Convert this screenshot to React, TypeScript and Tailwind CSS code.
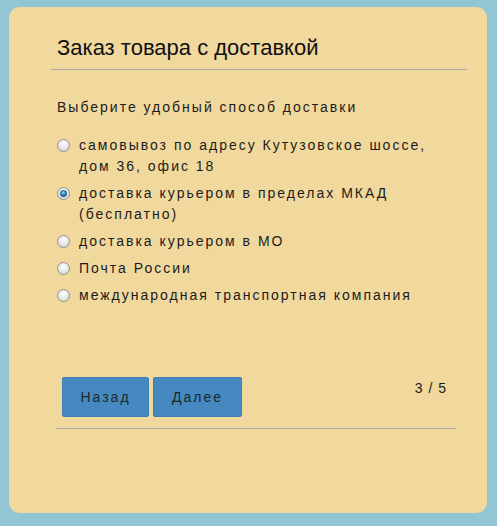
import React from "react";

const options = [
  { label: "самовывоз по адресу Кутузовское шоссе, дом 36, офис 18", checked: false },
  { label: "доставка курьером в пределах МКАД (бесплатно)", checked: true },
  { label: "доставка курьером в МО", checked: false },
  { label: "Почта России", checked: false },
  { label: "международная транспортная компания", checked: false },
];

function Radio({ checked }: { checked: boolean }) {
  return (
    <svg width="13" height="13" viewBox="0 0 13 13" className="shrink-0 mt-[4px]">
      <defs>
        <radialGradient id="rg" cx="50%" cy="35%" r="65%">
          <stop offset="0%" stopColor="#ffffff" />
          <stop offset="100%" stopColor="#d8d8d8" />
        </radialGradient>
        <radialGradient id="rb" cx="45%" cy="35%" r="60%">
          <stop offset="0%" stopColor="#7fd0f5" />
          <stop offset="100%" stopColor="#0a5f96" />
        </radialGradient>
      </defs>
      <circle cx="6.5" cy="6.5" r="6" fill="url(#rg)" stroke="#8f8f8f" strokeWidth="1" />
      {checked && <circle cx="6.5" cy="6.5" r="3.2" fill="url(#rb)" stroke="#1d4d6e" strokeWidth="0.6" />}
    </svg>
  );
}

export default function App() {
  return (
    <div className="w-[497px] h-[526px] bg-[#92c6d5] pt-[7px] pl-[9px] pr-[10px] pb-[13px] font-['Liberation_Sans',Arial,sans-serif] text-[#1c1c1c]">
      <div className="h-full bg-[#f1d89d] rounded-[11px] pt-[28px] pl-[42px] pr-[20px]">
        <div className="border-b border-[#a9a9a9] pb-[9px] pl-[6px]">
          <h1 className="text-[22px] leading-[25px] text-[#111]">Заказ товара с доставкой</h1>
        </div>
        <div className="pl-[6px] pt-[27px] text-[14px] tracking-[2px]">
          <p className="leading-[20px]">Выберите удобный способ доставки</p>
          <div className="mt-[18px] flex flex-col gap-[6px]">
            {options.map((o) => (
              <label key={o.label} className="flex items-start gap-[9px] leading-[21px] pr-[20px]">
                <Radio checked={o.checked} />
                <span>{o.label}</span>
              </label>
            ))}
          </div>
        </div>
        <div className="mt-[71px] ml-[5px] mr-[11px] flex items-start border-b border-[#a9a9a9] pb-[11px]">
          <div className="flex gap-[4px] pl-[6px]">
            <button className="w-[87px] h-[40px] bg-[#4689c0] rounded-[2px] text-[14px] tracking-[2px] text-[#1a2a2a] border border-[#3f7fb3]">Назад</button>
            <button className="w-[89px] h-[40px] bg-[#4689c0] rounded-[2px] text-[14px] tracking-[2px] text-[#1a2a2a] border border-[#3f7fb3]">Далее</button>
          </div>
          <div className="ml-auto mr-[9px] pt-[1px] text-[14px] tracking-[1px]">3 / 5</div>
        </div>
      </div>
    </div>
  );
}
